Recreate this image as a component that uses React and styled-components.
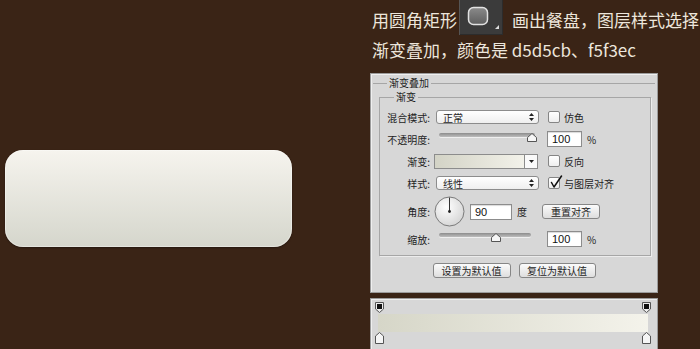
import styled, { createGlobalStyle } from "styled-components";

const GlobalStyle = createGlobalStyle`
  body {
    margin: 0;
    background: #3a2416;
    font-family: "Noto Sans CJK SC", "Noto Sans", sans-serif;
  }
  #root {
    width: 700px;
    height: 349px;
    overflow: hidden;
  }
`;

const Checkbox = ({ checked }) => (
  <Box>
    {checked && (
      <svg width="14" height="14" viewBox="0 0 14 14">
        <path
          d="M2.5 7.5 L5 12 L12.5 1"
          fill="none"
          stroke="#111"
          strokeWidth="1.5"
          strokeLinecap="round"
          strokeLinejoin="round"
        />
      </svg>
    )}
  </Box>
);

const UpDown = () => (
  <svg width="5" height="8" viewBox="0 0 5 8">
    <path d="M2.5 0 L5 3 H0 Z M2.5 8 L5 5 H0 Z" fill="#222" />
  </svg>
);

const Slider = ({ width, pos }) => (
  <SliderWrap $w={width}>
    <Track />
    <Thumb $pos={pos}>
      <svg width="10" height="9" viewBox="0 0 10 9">
        <path
          d="M5 0.5 L9.5 4.5 V8.5 H0.5 V4.5 Z"
          fill="#f6f6f6"
          stroke="#555"
          strokeWidth="1"
        />
      </svg>
    </Thumb>
  </SliderWrap>
);

const Dial = () => (
  <svg width="31" height="31" viewBox="0 0 31 31">
    <defs>
      <radialGradient id="dg" cx="40%" cy="35%" r="70%">
        <stop offset="0" stopColor="#ffffff" />
        <stop offset="1" stopColor="#d4d4d4" />
      </radialGradient>
    </defs>
    <circle cx="15.5" cy="15.5" r="14.5" fill="url(#dg)" stroke="#7a7a7a" />
    <line x1="15.5" y1="15.5" x2="15.5" y2="1.5" stroke="#333" strokeWidth="1" />
    <circle cx="15.5" cy="15.5" r="1.4" fill="#222" />
  </svg>
);

const TopStop = () => (
  <svg width="9" height="11" viewBox="0 0 9 11">
    <path d="M0.5 0.5 H8.5 V7 L4.5 10.5 L0.5 7 Z" fill="#ededed" stroke="#555" />
    <rect x="2" y="2" width="5" height="5" fill="#111" />
  </svg>
);

const BottomStop = () => (
  <svg width="9" height="12" viewBox="0 0 9 12">
    <path d="M4.5 0.5 L8.5 4 V11.5 H0.5 V4 Z" fill="#f5f5f5" stroke="#555" />
  </svg>
);

const App = () => {
  return (
    <Page>
      <GlobalStyle />
      <Left>
        <Plate />
      </Left>
      <Right>
        <Caption>
          <Line1>
            <span>用圆角矩形</span>
            <ToolIcon>
              <svg width="44" height="35" viewBox="0 0 44 35">
                <defs>
                  <linearGradient id="tg" x1="0" y1="0" x2="0" y2="1">
                    <stop offset="0" stopColor="#8a8a8a" />
                    <stop offset="1" stopColor="#5e5e5e" />
                  </linearGradient>
                </defs>
                <rect
                  x="9.5"
                  y="7.5"
                  width="19"
                  height="17"
                  rx="5"
                  fill="url(#tg)"
                  stroke="#e2e2e2"
                  strokeWidth="1.5"
                />
                <path d="M40 25 L40 29 L36 29 Z" fill="#dcdcdc" />
              </svg>
            </ToolIcon>
            <span>画出餐盘，图层样式选择</span>
          </Line1>
          <Line2>渐变叠加，颜色是 d5d5cb、f5f3ec</Line2>
        </Caption>

        <Panel>
          <OuterGroup>
            <Legend>渐变叠加</Legend>
            <InnerGroup>
              <Legend>渐变</Legend>
              <Row>
                <Label>混合模式:</Label>
                <Cell>
                  <Select>
                    <span>正常</span>
                    <UpDown />
                  </Select>
                </Cell>
                <Cell>
                  <Checkbox />
                  <CheckText>仿色</CheckText>
                </Cell>
              </Row>
              <Row>
                <Label>不透明度:</Label>
                <Cell>
                  <Slider width={96} pos={92.5} />
                </Cell>
                <Cell>
                  <NumInput $w={35}>100</NumInput>
                  <Unit>%</Unit>
                </Cell>
              </Row>
              <Row>
                <Label>渐变:</Label>
                <Cell>
                  <Swatch>
                    <SwatchFill />
                    <SwatchArrow>
                      <svg width="5" height="3" viewBox="0 0 5 3">
                        <path d="M0 0 H5 L2.5 3 Z" fill="#222" />
                      </svg>
                    </SwatchArrow>
                  </Swatch>
                </Cell>
                <Cell>
                  <Checkbox />
                  <CheckText>反向</CheckText>
                </Cell>
              </Row>
              <Row>
                <Label>样式:</Label>
                <Cell>
                  <Select>
                    <span>线性</span>
                    <UpDown />
                  </Select>
                </Cell>
                <Cell>
                  <Checkbox checked />
                  <CheckText>与图层对齐</CheckText>
                </Cell>
              </Row>
              <Row $tall>
                <Label>角度:</Label>
                <Cell>
                  <DialWrap>
                    <Dial />
                  </DialWrap>
                  <NumInput $w={42}>90</NumInput>
                  <Unit>度</Unit>
                </Cell>
                <Cell>
                  <ResetButton>重置对齐</ResetButton>
                </Cell>
              </Row>
              <Row>
                <Label>缩放:</Label>
                <Cell>
                  <Slider width={92} pos={56.7} />
                </Cell>
                <Cell>
                  <NumInput $w={35}>100</NumInput>
                  <Unit>%</Unit>
                </Cell>
              </Row>
            </InnerGroup>
            <Buttons>
              <Button $w={78}>设置为默认值</Button>
              <Button $w={77}>复位为默认值</Button>
            </Buttons>
          </OuterGroup>
        </Panel>

        <GradientPanel>
          <StopRow>
            <TopStop />
            <TopStop />
          </StopRow>
          <GradientBar />
          <StopRow>
            <BottomStop />
            <BottomStop />
          </StopRow>
        </GradientPanel>
      </Right>
    </Page>
  );
};

export default App;

const Page = styled.div`
  display: flex;
  width: 700px;
  height: 349px;
`;

const Left = styled.div`
  width: 370px;
  flex-shrink: 0;
  box-sizing: border-box;
  padding: 150px 0 0 5px;
`;

const Plate = styled.div`
  width: 287px;
  height: 97px;
  border-radius: 18px;
  background: linear-gradient(#f6f4ee, #d5d6cc);
  box-shadow: inset 0 0 0 1px rgba(255, 255, 255, 0.35),
    0 1px 2px rgba(0, 0, 0, 0.35);
`;

const Right = styled.div`
  width: 330px;
  flex-shrink: 0;
  display: flex;
  flex-direction: column;
  & > * {
    flex-shrink: 0;
  }
`;

const Caption = styled.div`
  color: #ede6dc;
  font-size: 17px;
  padding-left: 2px;
  white-space: nowrap;
`;

const Line1 = styled.div`
  display: flex;
  align-items: center;
  height: 38px;
`;

const ToolIcon = styled.div`
  align-self: flex-start;
  width: 44px;
  height: 35px;
  margin: 0 9px 0 2px;
  background: #3b3b3b;
  box-shadow: inset 1px 0 #555, inset -1px 0 #2c2c2c, inset 0 -1px #2c2c2c;
  display: flex;
`;

const Line2 = styled.div`
  height: 24px;
  line-height: 24px;
`;

const Panel = styled.div`
  margin-top: 11px;
  width: 288px;
  height: 220px;
  box-sizing: border-box;
  background: #d7d7d7;
  border: 1px solid #9c9c9c;
  box-shadow: inset 1px 1px #efefef;
  padding: 3px 2px 0;
`;

const OuterGroup = styled.fieldset`
  margin: 0;
  padding: 0;
  border: 0;
  border-top: 1px solid #a6a6a6;
  min-width: 0;
`;

const Legend = styled.legend`
  margin-left: 14px;
  padding: 0 2px;
  font-size: 10px;
  line-height: 12px;
  color: #1e1e1e;
`;

const InnerGroup = styled.fieldset`
  margin: 2px 4px 0 6px;
  padding: 5px 0 7px;
  border: 1px solid #a6a6a6;
  box-shadow: 1px 1px #ececec;
  display: flex;
  flex-direction: column;
  gap: 4px;
  min-width: 0;
`;

const Row = styled.div`
  display: grid;
  grid-template-columns: 50px 105px auto;
  column-gap: 6px;
  align-items: center;
  height: ${(p) => (p.$tall ? "30px" : "18px")};
`;

const Label = styled.div`
  text-align: right;
  font-size: 10px;
  color: #1e1e1e;
  white-space: nowrap;
`;

const Cell = styled.div`
  display: flex;
  align-items: center;
  height: 100%;
`;

const Select = styled.div`
  width: 103px;
  height: 14px;
  box-sizing: border-box;
  border: 1px solid #8c8c8c;
  border-radius: 3px;
  background: linear-gradient(#ffffff, #efefef);
  display: flex;
  align-items: center;
  justify-content: space-between;
  padding: 0 4px 0 6px;
  font-size: 10px;
  color: #1e1e1e;
`;

const Box = styled.div`
  width: 12px;
  height: 12px;
  margin-left: 1px;
  box-sizing: border-box;
  border: 1px solid #858585;
  border-radius: 2px;
  background: linear-gradient(#ffffff, #eeeeee);
  position: relative;
  svg {
    position: absolute;
    left: 0;
    top: -3px;
  }
`;

const CheckText = styled.span`
  margin-left: 4px;
  font-size: 10px;
  color: #1e1e1e;
`;

const SliderWrap = styled.div`
  position: relative;
  width: ${(p) => p.$w}px;
  height: 100%;
  margin-left: 3px;
`;

const Track = styled.div`
  margin-top: 3px;
  height: 4px;
  border-radius: 2px;
  background: linear-gradient(#8c8c8c, #bdbdbd);
  box-shadow: 0 1px #efefef;
`;

const Thumb = styled.div`
  position: absolute;
  top: 3px;
  left: ${(p) => p.$pos}px;
  margin-left: -5px;
  display: flex;
`;

const NumInput = styled.div`
  width: ${(p) => p.$w}px;
  height: 16px;
  box-sizing: border-box;
  border: 1px solid #8c8c8c;
  background: #fff;
  box-shadow: inset 0 1px 1px rgba(0, 0, 0, 0.15);
  padding-left: 4px;
  font-family: "Liberation Sans", "Noto Sans", sans-serif;
  font-size: 11px;
  line-height: 14px;
  color: #111;
`;

const Unit = styled.span`
  margin-left: 5px;
  font-size: 10px;
  color: #1e1e1e;
`;

const Swatch = styled.div`
  width: 104px;
  height: 15px;
  margin-left: -2px;
  box-sizing: border-box;
  border: 1px solid #8c8c8c;
  display: flex;
`;

const SwatchFill = styled.div`
  flex: 1;
  background: linear-gradient(90deg, #d3d3c6, #f3f2ea);
`;

const SwatchArrow = styled.div`
  width: 12px;
  border-left: 1px solid #8c8c8c;
  background: #fafafa;
  display: flex;
  align-items: center;
  justify-content: center;
`;

const DialWrap = styled.div`
  display: flex;
  margin: 0 5px 0 -2px;
`;

const ButtonBase = styled.div`
  height: 15px;
  box-sizing: border-box;
  border: 1px solid #868686;
  border-radius: 3px;
  background: linear-gradient(#fbfbfb, #dedede);
  font-size: 10px;
  color: #1e1e1e;
  display: flex;
  align-items: center;
  justify-content: center;
  white-space: nowrap;
`;

const ResetButton = styled(ButtonBase)`
  width: 58px;
  margin-left: -5px;
`;

const Buttons = styled.div`
  display: flex;
  justify-content: center;
  gap: 8px;
  margin-top: 7px;
`;

const Button = styled(ButtonBase)`
  width: ${(p) => p.$w}px;
`;

const GradientPanel = styled.div`
  margin-top: 5px;
  width: 288px;
  height: 60px;
  box-sizing: border-box;
  background: #d7d7d7;
  border: 1px solid #9c9c9c;
  border-bottom: 0;
  box-shadow: inset 1px 1px #efefef;
  padding: 3px 9px 0 7px;
`;

const StopRow = styled.div`
  display: flex;
  justify-content: space-between;
  margin: 0 -3px 0 -3px;
  svg {
    display: block;
  }
`;

const GradientBar = styled.div`
  height: 18px;
  margin: 1px 0 0;
  background: linear-gradient(90deg, #d6d6c8, #f4f3eb);
`;
